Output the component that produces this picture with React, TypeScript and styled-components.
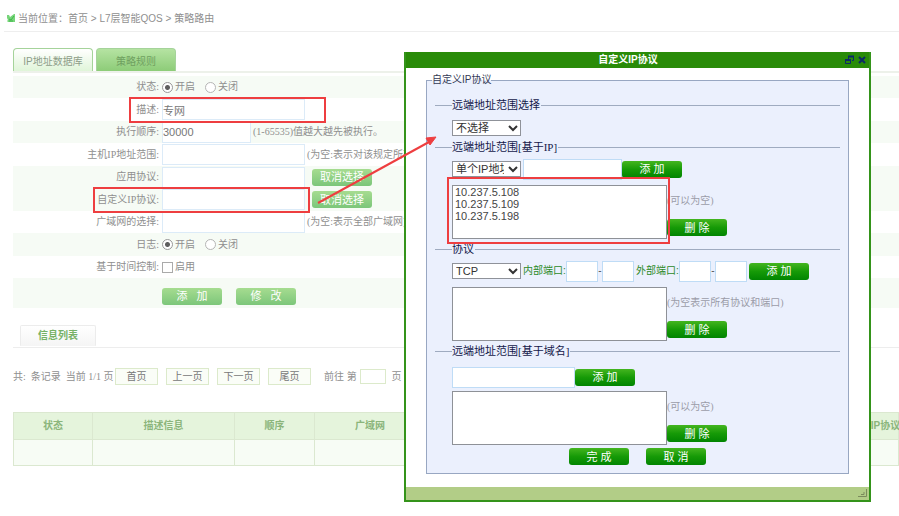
import React from "react";
import styled, { createGlobalStyle, css } from "styled-components";

const sans = `"Liberation Sans", "Noto Sans CJK SC", sans-serif`;
const serif = `"Liberation Serif", "Noto Sans CJK SC", serif`;

const GlobalStyle = createGlobalStyle`
  *, *::before, *::after { box-sizing: border-box; }
  body { margin: 0; background: #fff; font: 10px/14px ${sans}; color: #8f8f8f; }
  input, select, textarea, button { font-family: inherit; margin: 0; border-radius: 0; outline: 0; }
`;

const Page = styled.main`
  position: relative;
  min-height: 100vh;
  overflow: hidden;
`;

const Breadcrumb = styled.nav`
  display: flex;
  align-items: center;
  gap: 2px;
  height: 32px;
  margin-left: 4px;
  padding: 6px 3px 0;
  border-bottom: 1px solid #eeeeee;
  white-space: pre;
  a { color: inherit; text-decoration: none; }
`;

const Content = styled.div`
  margin-left: 13px;
`;

const Tabs = styled.div`
  display: flex;
  gap: 3px;
  padding-top: 16px;
  border-bottom: 2px solid #edf1ea;
`;

const Tab = styled.button<{ $active?: boolean }>`
  width: 80px;
  height: 23px;
  padding: 0;
  border: 1px solid #a5d39a;
  border-bottom: 0;
  border-radius: 4px 4px 0 0;
  font-size: 10px;
  color: ${p => (p.$active ? "#8d9d88" : "#6fa05f")};
  background: ${p =>
    p.$active
      ? "linear-gradient(#ffffff, #e0f5d9)"
      : "linear-gradient(#b5e3a2, #8dcc78)"};
`;

const Form = styled.form`
  padding-top: 3px;
`;

const FormRow = styled.div<{ $shaded?: boolean }>`
  display: flex;
  align-items: center;
  position: relative;
  height: 22px;
  background: ${p => (p.$shaded ? "#f6fbf5" : "#fff")};
  font-family: ${serif};
  white-space: nowrap;
  &:nth-child(even) { height: 23px; }
`;

const RowLabel = styled.label`
  flex: 0 0 146px;
  margin-right: 3px;
  text-align: right;
`;

const TextField = styled.input<{ $w: number }>`
  width: ${p => p.$w}px;
  height: 21px;
  padding: 0;
  border: 1px solid #dcebf8;
  background: #fff;
  color: #777;
  font: 11px ${sans};
`;

const Hint = styled.span`
  margin-left: 2px;
`;

const Choice = styled.label`
  display: flex;
  align-items: center;
  gap: 2px;
  width: 43px;
`;

const Radio = styled.input`
  appearance: none;
  width: 11px;
  height: 11px;
  border: 1px solid #b5b5b5;
  border-radius: 50%;
  background: #fff;
  &:checked { background: radial-gradient(circle, #5e5e5e 0 2px, #fff 3px); border-color: #999; }
`;

const Check = styled.input`
  appearance: none;
  width: 11px;
  height: 11px;
  border: 1px solid #aaa;
  background: #fff;
`;

const Button = styled.button<{ $faded?: boolean }>`
  flex: none;
  width: 60px;
  height: 17px;
  padding: 0;
  border: 0;
  border-radius: 3px;
  color: #fff;
  font-size: 11px;
  line-height: 16px;
  white-space: pre;
  background: ${p =>
    p.$faded
      ? "linear-gradient(#a6dc90, #7cc67a)"
      : "linear-gradient(#44b51f, #169a07 50%, #018501)"};
`;

const CancelChoice = styled(Button)`
  margin-left: 7px;
`;

const Actions = styled.div`
  display: flex;
  align-items: center;
  gap: 14px;
  height: 30px;
  margin-bottom: 17px;
  padding: 6px 0 0 149px;
  background: #f6fbf5;
`;

const ListHeader = styled.div`
  padding: 0 0 1px 7px;
  border-bottom: 1px solid #ededed;
`;

const ListTab = styled.h2`
  width: 76px;
  margin: 0;
  border: 1px solid #ececec;
  border-bottom-color: #f5f5f5;
  border-radius: 2px 2px 0 0;
  background: linear-gradient(#ffffff, #f5f5f5);
  color: #76b166;
  font-size: 10px;
  line-height: 19px;
  text-align: center;
`;

const Pager = styled.div`
  display: flex;
  align-items: center;
  height: 17px;
  margin: 20px 0 27px;
  white-space: pre;
`;

const PagerInfo = styled.span`
  width: 102px;
  font-family: ${serif};
`;

const PageButton = styled.button`
  width: 43px;
  height: 17px;
  margin-right: 8px;
  padding: 0;
  border: 1px solid #dceacb;
  background: #fafdf7;
  color: #777;
  font-size: 10px;
  line-height: 14px;
`;

const Jump = styled.label`
  display: flex;
  align-items: center;
  gap: 3px;
  margin-left: 5px;
`;

const JumpInput = styled.input`
  width: 26px;
  height: 15px;
  border: 1px solid #dceacb;
`;

const Table = styled.table`
  width: 100%;
  table-layout: fixed;
  border-collapse: collapse;
  th, td { border: 1px solid #dbe8d0; padding: 0; white-space: nowrap; }
  th { height: 27px; background: #e5f4dc; color: #8bb57b; font-size: 10px; }
  td { height: 26px; background: #f7fcf5; }
`;

const Col = styled.col<{ $w?: number }>`
  width: ${p => (p.$w ? `${p.$w}px` : "auto")};
`;

const LastHeading = styled.span`
  display: flex;
  justify-content: center;
`;

const markBorder = css`
  position: absolute;
  z-index: 2;
  border: 2px solid #ee3e40;
  pointer-events: none;
`;

const RowMark = styled.span<{ $left: number; $width: number }>`
  ${markBorder}
  left: ${p => p.$left}px;
  width: ${p => p.$width}px;
  top: -1px;
  bottom: -2px;
`;

const ListMark = styled.span`
  ${markBorder}
  left: -5px;
  right: -3px;
  top: -8px;
  bottom: -5px;
`;

const Arrow = styled.svg`
  position: absolute;
  z-index: 4;
  left: 316px;
  top: 134px;
  width: 124px;
  height: 72px;
  pointer-events: none;
`;

const Dialog = styled.section`
  position: absolute;
  z-index: 3;
  left: 404px;
  right: 28px;
  top: 52px;
  min-width: 460px;
  border: 2px solid #34931a;
  border-top: 0;
  background: #fff;
`;

const TitleBar = styled.header`
  display: flex;
  align-items: center;
  justify-content: flex-end;
  position: relative;
  height: 16px;
  padding-right: 1px;
  background: #298b08;
`;

const Title = styled.h1`
  flex: 1;
  margin: 0;
  padding-left: 6px;
  color: #fff;
  font-size: 10px;
  line-height: 16px;
  text-align: center;
`;

const IconButton = styled.button`
  display: flex;
  width: 12px;
  height: 12px;
  padding: 1px;
  border: 0;
  background: none;
`;

const Panel = styled.fieldset`
  min-width: 0;
  margin: 6px 20px 13px;
  padding: 13px 8px 8px;
  border: 1px solid #98a7c2;
  background: #ebf0fd;
`;

const PanelLegend = styled.legend`
  margin-left: -3px;
  padding: 0;
  color: #333a55;
  line-height: 12px;
`;

const Section = styled.fieldset`
  min-width: 0;
  margin: 0;
  padding: 6px 0 4px 17px;
  border: 0;
  border-top: 1px solid #9fabc0;
`;

const SectionLegend = styled.legend`
  padding: 0 1px 0 0;
  color: #14184a;
  font: 11px/12px ${serif};
`;

const Line = styled.div<{ $mb?: number; $top?: number; $compact?: boolean }>`
  display: flex;
  align-items: center;
  height: ${p => (p.$compact ? 16 : 20)}px;
  margin-top: ${p => p.$top ?? 0}px;
  margin-bottom: ${p => p.$mb ?? 0}px;
`;

const SelectBox = styled.span`
  position: relative;
  display: block;
  flex: none;
  width: 69px;
  height: 16px;
  margin-right: 2px;
  svg { position: absolute; right: 3px; top: 5px; pointer-events: none; }
`;

const Select = styled.select`
  appearance: none;
  display: block;
  width: 100%;
  height: 100%;
  padding: 0 16px 0 3px;
  border: 1px solid #8f9299;
  background: #fff;
  color: #333;
  font-size: 11px;
  line-height: 14px;
`;

const DialogInput = styled.input<{ $w: number }>`
  flex: none;
  width: ${p => p.$w}px;
  height: 21px;
  padding: 0 2px;
  border: 1px solid #bfdcf6;
  background: #fff;
  font-size: 11px;
`;

const PortLabel = styled.label`
  color: #2c8a28;
  width: 43px;
  white-space: nowrap;
`;

const Dash = styled.span`
  width: 4px;
  text-align: center;
  color: #555;
`;

const PortButton = styled(Button)`
  margin-left: 2px;
`;

const PortGap = styled.span`
  width: 2px;
`;

const ListLine = styled.div`
  display: flex;
  align-items: flex-start;
`;

const ListHolder = styled.div`
  position: relative;
  flex: none;
  width: 215px;
  height: 54px;
`;

const ListArea = styled.textarea`
  display: block;
  width: 100%;
  height: 100%;
  resize: none;
  padding: 0 2px;
  overflow: hidden;
  border: 1px solid #8e9197;
  background: #fff;
  color: #444;
  font-size: 11px;
  line-height: 12px;
`;

const Side = styled.div`
  display: flex;
  flex-direction: column;
  align-items: flex-start;
  gap: 11px;
  padding-top: 9px;
  color: #9b9ca8;
  font-family: ${serif};
  white-space: nowrap;
  button { font-family: ${sans}; }
`;

const DialogActions = styled.div`
  display: flex;
  justify-content: center;
  gap: 17px;
  margin-top: -1px;
`;

const StatusBar = styled.footer`
  display: flex;
  justify-content: flex-end;
  align-items: flex-end;
  height: 13px;
  padding: 2px;
  background: #b2cd87;
`;

function Dropdown({ id, label, options }: { id: string; label: string; options: string[] }) {
  return (
    <SelectBox>
      <Select id={id} aria-label={label}>
        {options.map(o => <option key={o}>{o}</option>)}
      </Select>
      <svg width="10" height="7" viewBox="0 0 10 7" fill="none" stroke="#333" strokeWidth="2">
        <path d="M1 1l4 4 4-4" />
      </svg>
    </SelectBox>
  );
}

function AddressList({ name, hint, value, marked }: { name: string; hint: string; value?: string; marked?: boolean }) {
  return (
    <ListLine>
      <ListHolder>
        <ListArea aria-label={name} defaultValue={value} />
        {marked && <ListMark />}
      </ListHolder>
      <Side>
        <span>{hint}</span>
        <Button type="button">删 除</Button>
      </Side>
    </ListLine>
  );
}

function OnOff({ name }: { name: string }) {
  return (
    <>
      <Choice><Radio type="radio" name={name} defaultChecked />开启</Choice>
      <Choice><Radio type="radio" name={name} />关闭</Choice>
    </>
  );
}

export default function App() {
  return (
    <>
      <GlobalStyle />
      <Page>
        <Breadcrumb>
          <svg width="9" height="9" viewBox="0 0 9 9">
            <path d="M0 1h2l1 2 4-3h1v8H1L0 7l1-1-1-2z" fill="#77d57a" />
            <path d="M2 5l2 1 3-4M2 7h4" stroke="#3fb649" fill="none" />
          </svg>
          <span>当前位置：<a href="#home">首页</a> {">"} <a href="#qos">L7层智能QOS</a> {">"} <a href="#route">策略路由</a></span>
        </Breadcrumb>
        <Content>
          <Tabs>
            <Tab type="button" $active>IP地址数据库</Tab>
            <Tab type="button">策略规则</Tab>
          </Tabs>
          <Form>
            <FormRow $shaded><RowLabel as="span">状态:</RowLabel><OnOff name="status" /></FormRow>
            <FormRow>
              <RowLabel htmlFor="desc">描述:</RowLabel>
              <TextField id="desc" $w={143} defaultValue="专网" />
              <RowMark $left={116} $width={197} />
            </FormRow>
            <FormRow $shaded>
              <RowLabel htmlFor="order">执行顺序:</RowLabel>
              <TextField id="order" $w={89} defaultValue="30000" />
              <Hint>(1-65535)值越大越先被执行。</Hint>
            </FormRow>
            <FormRow>
              <RowLabel htmlFor="host">主机IP地址范围:</RowLabel>
              <TextField id="host" $w={143} />
              <Hint>(为空:表示对该规定所有</Hint>
            </FormRow>
            <FormRow $shaded>
              <RowLabel htmlFor="app">应用协议:</RowLabel>
              <TextField id="app" $w={143} />
              <CancelChoice type="button" $faded>取消选择</CancelChoice>
            </FormRow>
            <FormRow $shaded>
              <RowLabel htmlFor="custom">自定义IP协议:</RowLabel>
              <TextField id="custom" $w={143} />
              <CancelChoice type="button" $faded>取消选择</CancelChoice>
              <RowMark $left={80} $width={217} />
            </FormRow>
            <FormRow>
              <RowLabel htmlFor="wan">广域网的选择:</RowLabel>
              <TextField id="wan" $w={143} />
              <Hint>(为空:表示全部广域网)</Hint>
            </FormRow>
            <FormRow $shaded><RowLabel as="span">日志:</RowLabel><OnOff name="log" /></FormRow>
            <FormRow>
              <RowLabel as="span">基于时间控制:</RowLabel>
              <Choice><Check type="checkbox" />启用</Choice>
            </FormRow>
            <Actions>
              <Button type="button" $faded>{"添\u00a0\u00a0\u00a0加"}</Button>
              <Button type="button" $faded>{"修\u00a0\u00a0\u00a0改"}</Button>
            </Actions>
          </Form>
          <ListHeader><ListTab>信息列表</ListTab></ListHeader>
          <Pager>
            <PagerInfo>共:  条记录  当前 1/1 页</PagerInfo>
            {["首页", "上一页", "下一页", "尾页"].map(t => <PageButton key={t} type="button">{t}</PageButton>)}
            <Jump>前往 第<JumpInput aria-label="页码" /> 页</Jump>
          </Pager>
          <Table>
            <colgroup>
              <Col $w={79} /><Col $w={142} /><Col $w={80} /><Col $w={111} /><Col /><Col $w={56} />
            </colgroup>
            <thead>
              <tr>
                <th>状态</th><th>描述信息</th><th>顺序</th><th>广域网</th><th />
                <th><LastHeading>自定义IP协议</LastHeading></th>
              </tr>
            </thead>
            <tbody><tr><td /><td /><td /><td /><td /><td /></tr></tbody>
          </Table>
        </Content>

        <Dialog role="dialog" aria-labelledby="dialog-title">
          <TitleBar>
            <Title id="dialog-title">自定义IP协议</Title>
            <IconButton type="button" aria-label="还原">
              <svg width="10" height="10" viewBox="0 0 10 10" fill="none" stroke="#0b2a66">
                <path d="M3.5 4V1.5h5v4H7M.5 4.5h5v4h-5z" />
                <path d="M3 1.5h6M0 5h6" strokeWidth="2" />
              </svg>
            </IconButton>
            <IconButton type="button" aria-label="关闭">
              <svg width="10" height="10" viewBox="0 0 10 10" stroke="#0b2a66" strokeWidth="2">
                <path d="M2 2l6 6M8 2L2 8" />
              </svg>
            </IconButton>
          </TitleBar>
          <Panel>
            <PanelLegend>自定义IP协议</PanelLegend>
            <Section>
              <SectionLegend>远端地址范围选择</SectionLegend>
              <Line $compact $top={3} $mb={1}>
                <Dropdown id="range" label="远端地址范围选择" options={["不选择"]} />
              </Line>
            </Section>
            <Section>
              <SectionLegend>远端地址范围[基于IP]</SectionLegend>
              <Line $mb={6}>
                <Dropdown id="iptype" label="地址类型" options={["单个IP地址"]} />
                <DialogInput $w={99} aria-label="IP地址" />
                <Button type="button">添 加</Button>
              </Line>
              <AddressList name="IP地址列表" hint="(可以为空)" marked value={"10.237.5.108\n10.237.5.109\n10.237.5.198"} />
            </Section>
            <Section>
              <SectionLegend>协议</SectionLegend>
              <Line $mb={6}>
                <Dropdown id="proto" label="协议" options={["TCP"]} />
                <PortLabel htmlFor="inner">内部端口:</PortLabel>
                <DialogInput id="inner" $w={32} /><Dash>-</Dash><DialogInput $w={32} aria-label="内部结束端口" />
                <PortGap />
                <PortLabel htmlFor="outer">外部端口:</PortLabel>
                <DialogInput id="outer" $w={32} /><Dash>-</Dash><DialogInput $w={32} aria-label="外部结束端口" />
                <PortButton type="button">添 加</PortButton>
              </Line>
              <AddressList name="协议列表" hint="(为空表示所有协议和端口)" />
            </Section>
            <Section>
              <SectionLegend>远端地址范围[基于域名]</SectionLegend>
              <Line $mb={4} $top={4}>
                <DialogInput $w={123} aria-label="域名" />
                <Button type="button">添 加</Button>
              </Line>
              <AddressList name="域名列表" hint="(可以为空)" />
            </Section>
            <DialogActions>
              <Button type="button">完 成</Button>
              <Button type="button">取 消</Button>
            </DialogActions>
          </Panel>
          <StatusBar>
            <svg width="9" height="9" viewBox="0 0 9 9" stroke="#7b8b5c" fill="none">
              <path d="M0 7.5h8.5V0M3 5.5h3V3" />
            </svg>
          </StatusBar>
        </Dialog>

        <Arrow viewBox="0 0 124 72" aria-hidden="true">
          <path d="M2 69L113 8" stroke="#ee3e40" strokeWidth="2" />
          <path d="M120 3l-6 8-4-7z" fill="#ee3e40" stroke="#ee3e40" />
        </Arrow>
      </Page>
    </>
  );
}
